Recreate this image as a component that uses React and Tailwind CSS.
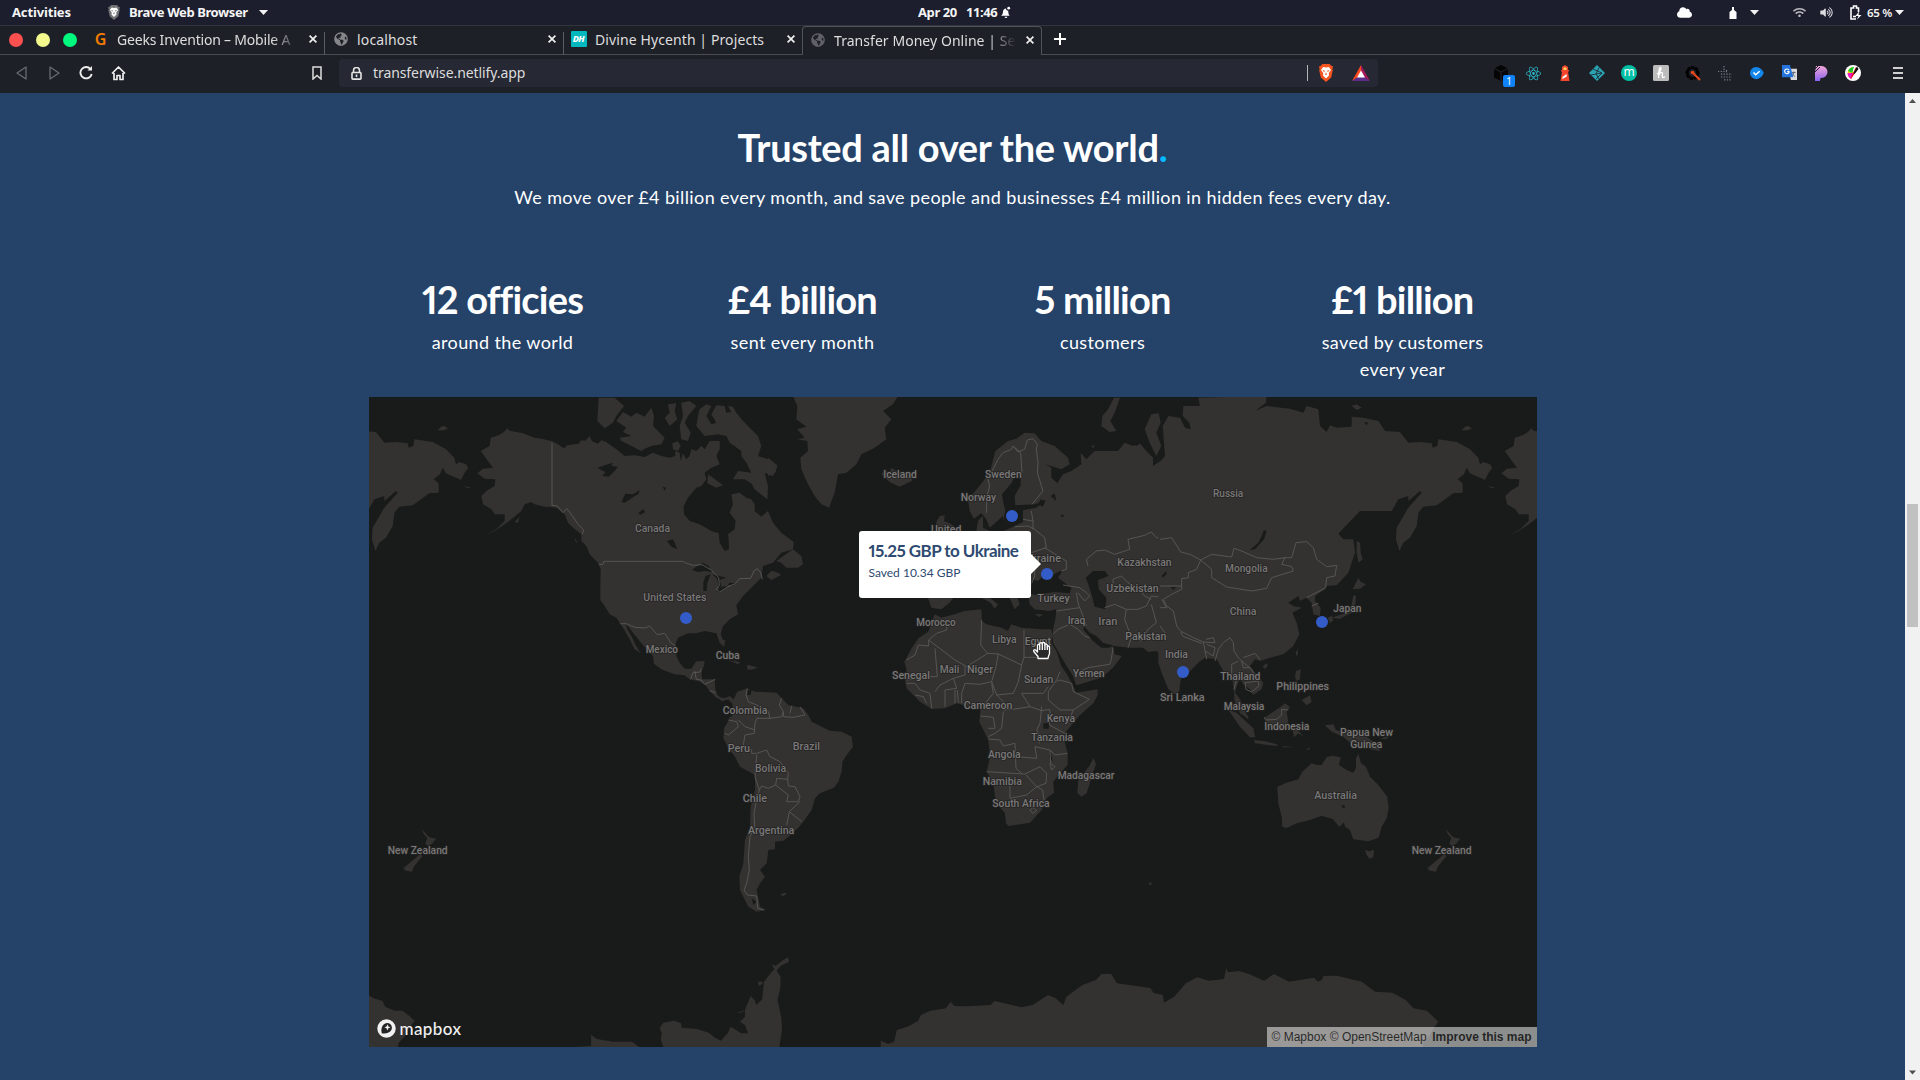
import React from "react";
import { SiReact } from "react-icons/si";
import { FaCloud, FaWifi, FaVolumeUp, FaGlobeAmericas } from "react-icons/fa";

const UI = "font-['Noto_Sans','Open_Sans',sans-serif]";

/* ---------- Desktop top bar ---------- */

function Caret() {
  return (
    <svg viewBox="0 0 9 5" className="h-[5px] w-[9px] shrink-0" fill="#f2f2f2">
      <path d="M0 0h9L4.5 5z" />
    </svg>
  );
}

function LionShield({ outer, inner, className }) {
  return (
    <svg viewBox="0 0 16 18" className={className}>
      <path d="M4.5 0h7l2 2 1.5 0.3-.6 3 .4 1-1.600 7.200L8 18l-5.200-4.500L1.200 6.300l.4-1-.6-3L2.500 2z" fill={outer} />
      <path d="M5.200 3l2.800.5 2.800-.5 2.200 3-2.200 3 .2 2.500L8 14.500 5 11.500 5.200 9 3 6z" fill={inner} />
      <path d="M4.800 6l2 .8v1L5 7.200zM11.200 6l-2 .8v1l1.800-.6zM8 8l.8 2.500L8 11.300l-.8-.8z" fill={outer} />
    </svg>
  );
}

function DesktopBar() {
  return (
    <div className={`relative flex h-[25px] shrink-0 items-center bg-[#1c1d2d] text-[13px] font-bold text-[#f4f4f4] ${UI}`}>
      <span className="ml-3 w-[95px] tracking-[-0.15px]">Activities</span>
      <LionShield outer="#6f7072" inner="#ffffff" className="h-[15px] w-[14px]" />
      <span className="ml-[8px] w-[130px] whitespace-nowrap tracking-[-0.4px]">Brave Web Browser</span>
      <Caret />
      <div className="ml-[650px] flex w-[110px] items-center gap-[9px] whitespace-nowrap tracking-[-0.4px]">
        <span>Apr 20</span>
        <span className="flex items-center gap-[3px]">
          11:46
          <svg viewBox="0 0 12 13" className="h-[13px] w-[11px]" fill="#fff">
            <path d="M1 10c2-1 2-2.500 2.300-5C3.700 3 5 2 6.500 2c.2 1.500 1 2.500 2.500 2.500 0 2.500.3 4 1.500 5.500zM5 11h3a1.500 1.500 0 0 1-3 0z" />
            <circle cx="9.500" cy="1.800" r="1.500" />
          </svg>
        </span>
      </div>
      <div className="ml-auto flex items-center pr-[16px]">
        <FaCloud className="h-[13px] w-[15px] text-white" />
        <svg viewBox="0 0 8 12" className="ml-[37px] h-[12px] w-[8px]" fill="#fff">
          <path d="M3 0h2v3l2.500 2v7h-7V5L3 3z" />
        </svg>
        <span className="ml-[13px] flex"><Caret /></span>
        <FaWifi className="ml-[34px] h-[11px] w-[13px] text-[#b9b9bd]" />
        <FaVolumeUp className="ml-[14px] h-[11px] w-[13px] text-[#dcdcdf]" />
        <svg viewBox="0 0 13 15" className="ml-[16px] h-[15px] w-[13px]" fill="none" stroke="#fff" strokeWidth="1.600">
          <path d="M9.500 5V3H7.500V1h-3v2H2v11h5M9.500 5v2" />
          <path d="M10 6.500 6.500 11h3L8 14.500 12.500 10h-3z" fill="#fff" stroke="none" />
          <path d="M4 11.500h3" />
        </svg>
        <span className="ml-[5px] w-[26px] whitespace-nowrap text-[11.500px] font-semibold tracking-[-0.3px]">65 %</span>
        <span className="ml-[2px] flex"><Caret /></span>
      </div>
    </div>
  );
}

/* ---------- Browser chrome ---------- */

function Close() {
  return (
    <svg viewBox="0 0 8 8" className="h-[8px] w-[8px] shrink-0" stroke="#f0f0f0" strokeWidth="1.700">
      <path d="M.6.6l6.800 6.800M7.400.6.6 7.400" />
    </svg>
  );
}

function Tab({ icon, title, active, fade, className }) {
  return (
    <div
      className={`flex h-[29px] items-center pb-[2px] pr-[7px] ${className} ${
        active ? "rounded-t-[4px] border border-b-0 border-[#51535a] bg-[#1e2028]" : "border-b border-[#4a4c53]"
      }`}
    >
      <span className="flex w-[17px] shrink-0 items-center justify-center">{icon}</span>
      <span
        className={`ml-[8px] min-w-0 flex-1 whitespace-nowrap text-[14px] text-[#dedede] ${
          fade ? "[mask-image:linear-gradient(to_right,#000_84%,transparent_99%)]" : ""
        }`}
      >
        {title}
      </span>
      <span className="ml-2 flex"><Close /></span>
    </div>
  );
}

function Divider() {
  return (
    <div className="flex h-[29px] w-px flex-col justify-end bg-[#1e2028]">
      <div className="h-[23px] w-px bg-[#5a5c62]" />
    </div>
  );
}

function TabStrip() {
  return (
    <div className={`flex h-[30px] shrink-0 items-end border-t border-[#32343e] bg-[#1e2028] ${UI}`}>
      <div className="flex h-[29px] w-[92px] items-center gap-[13px] border-b border-[#4a4c53] pl-[9px]">
        <span className="h-[14px] w-[14px] rounded-full bg-[#ff5050]" />
        <span className="h-[14px] w-[14px] rounded-full bg-[#f3f98c]" />
        <span className="h-[14px] w-[14px] rounded-full bg-[#00fa7e]" />
      </div>
      <Tab
        className="w-[232px] tracking-[-0.2px]"
        fade
        title="Geeks Invention – Mobile A"
        icon={<span className="text-[16px] font-semibold text-[#f57c00]">G</span>}
      />
      <Divider />
      <Tab className="w-[238px] pl-[7px] tracking-[0.15px]" title="localhost" icon={<FaGlobeAmericas className="h-[14px] w-[14px] text-[#85868a]" />} />
      <Divider />
      <Tab
        className="w-[238px] pl-[6px] tracking-[0.1px]"
        title="Divine Hycenth | Projects"
        icon={
          <span className="flex h-4 w-4 items-center justify-center rounded-[1px] bg-[#00b8bd] text-[9px] font-extrabold italic tracking-[-0.5px] text-white">
            DH
          </span>
        }
      />
      <Tab
        active
        fade
        className="w-[240px] pl-[6px] tracking-[0.05px]"
        title="Transfer Money Online | Se"
        icon={<FaGlobeAmericas className="h-[14px] w-[14px] text-[#606268]" />}
      />
      <div className="flex h-[29px] flex-1 items-center border-b border-[#4a4c53] pb-[2px] pl-[12px]">
        <svg viewBox="0 0 12 12" className="h-[12px] w-[12px]" stroke="#fff" strokeWidth="2">
          <path d="M6 0v12M0 6h12" />
        </svg>
      </div>
    </div>
  );
}

function Slot({ children, className }) {
  return <div className={`relative flex shrink-0 items-center justify-center ${className}`}>{children}</div>;
}

const extensions = [
  <>
    <svg viewBox="0 0 16 16" className="h-4 w-4">
      <path d="M8 0l7 3.500v9L8 16l-7-3.500v-9z" fill="#050506" />
      <path d="M1 3.500l7 3.500 7-3.500M8 7v9" stroke="#24262e" fill="none" />
    </svg>
    <span className="absolute left-[18px] top-[14px] flex h-[12px] w-[12px] items-center justify-center rounded-[2px] bg-[#1083fa] text-[10px] leading-none text-white">1</span>
  </>,
  <SiReact className="h-[15px] w-[15px] text-[#2cb5c8]" />,
  <svg viewBox="0 0 12 16" className="h-4 w-3">
    <path d="M3 2l3-2 3 2v3h1v1.500H9L10.500 16h-9L3 6.500H2V5h1z" fill="#f4452e" />
    <path d="M4.500 2.500h3V5h-3z" fill="#fdd55b" />
    <path d="M3.500 12l4-3 .3 2.500-4.500 2.500z" fill="#fff" />
  </svg>,
  <svg viewBox="0 0 16 16" className="h-4 w-4">
    <path d="M8 0l8 8-8 8-8-8z" fill="#2aa3b3" />
    <path d="M4 4l9 4-6 6M10 2.500L7 9l-5 1M7 9l3 5M13 8l-6 1" stroke="#1e2028" fill="none" strokeWidth=".8" />
  </svg>,
  <span className="flex h-4 w-4 items-center justify-center rounded-full bg-[#00bfa5] pb-[2px] text-[12px] leading-none text-white">m</span>,
  <svg viewBox="0 0 16 16" className="h-4 w-4">
    <rect width="16" height="16" rx="1.500" fill="#bcbcbc" />
    <path d="M4 9c3-1 5-6 3.500-6.500S5.800 8 5.500 13M6 10c1-3 3.500-3.500 3.500-1.500 0 1.500-.8 4 .8 4 1 0 1.700-1 1.700-1" stroke="#fff" fill="none" strokeWidth="1.300" />
  </svg>,
  <svg viewBox="0 0 16 16" className="h-4 w-4">
    <circle cx="7.500" cy="8" r="5.500" stroke="#000" strokeWidth="3" strokeDasharray="3 1" fill="none" />
    <circle cx="7.500" cy="8" r="5" stroke="#000" strokeWidth="2" fill="none" />
    <path d="M7 7l8 8" stroke="#e8471c" strokeWidth="2.200" />
    <circle cx="7.500" cy="7.500" r="1.800" fill="#e8471c" />
  </svg>,
  <svg viewBox="0 0 16 16" className="h-4 w-4" stroke="#7c7e85" strokeWidth="1.200" strokeDasharray="1.200 1.500">
    <path d="M7 1v5M1 6.500h9M4 9.200h11M4 12h11M7 14.800h8M9.500 5v3" />
  </svg>,
  <svg viewBox="0 0 16 16" className="h-[14px] w-[14px]">
    <path d="M7 1c4 0 8 4 8.500 6.500C15.500 11 11 15 7 15a7 7 0 0 1 0-14z" fill="#1386ea" />
    <path d="M4 7.500l2.500 2.500L11 6" stroke="#fff" strokeWidth="1.800" fill="none" />
  </svg>,
  <svg viewBox="0 0 17 17" className="h-4 w-[17px]">
    <path d="M7 4h9.500v12H10z" fill="#d9dadc" />
    <path d="M11 8h4M13 7v1c0 2-1 3-2 4M11.500 9c.5 1.500 2 3 3 3" stroke="#5c6470" fill="none" />
    <path d="M.5 0H9l3.500 13H.5z" fill="#2573dd" />
    <path d="M8 5.500A2.500 2.500 0 1 0 8 8V7H6" stroke="#fff" fill="none" strokeWidth="1.200" />
  </svg>,
  <svg viewBox="0 0 14 16" className="h-4 w-[14px]">
    <defs>
      <linearGradient id="plume" x1="0" y1="0" x2="0" y2="1">
        <stop offset="0" stopColor="#f3a7d8" />
        <stop offset="1" stopColor="#8a62f0" />
      </linearGradient>
    </defs>
    <path d="M2 1h5.500a6 6 0 0 1 0 12H6.500l-.5 3H1V7z" fill="url(#plume)" />
    <path d="M0 5l5-5M0 8l6-6" stroke="#1e2028" />
  </svg>,
  <svg viewBox="0 0 16 16" className="h-4 w-4">
    <circle cx="8" cy="8" r="8" fill="#fff" />
    <path d="M8 2a6 6 0 0 0-5.500 6H8z" fill="#ffd800" />
    <path d="M2.500 8c0 3 1.500 5 3.500 6l3-6z" fill="#f21ac1" />
    <path d="M3 6c1-2 3-4 6-4l-2 6z" fill="#18c933" />
    <path d="M11 2l2 2-5 7-2 3-.5-1L8 8z" fill="#e3101a" />
    <path d="M12 1.500l1.500 2.500-4 5-1-1z" fill="#101010" />
  </svg>,
];

function Toolbar() {
  return (
    <div className={`flex h-[38px] shrink-0 items-center bg-[#1e2028] pb-[2px] ${UI}`}>
      <Slot className="ml-[6px] w-8">
        <svg viewBox="0 0 12 14" className="h-[14px] w-[12px]" fill="none" stroke="#696b72" strokeWidth="1.300" strokeLinejoin="round">
          <path d="M10 1v12L1 7z" />
        </svg>
      </Slot>
      <Slot className="w-8">
        <svg viewBox="0 0 12 14" className="h-[14px] w-[12px]" fill="none" stroke="#696b72" strokeWidth="1.300" strokeLinejoin="round">
          <path d="M2 1v12l9-6z" />
        </svg>
      </Slot>
      <Slot className="w-8">
        <svg viewBox="0 0 14 14" className="h-[14px] w-[14px]" fill="none" stroke="#eee" strokeWidth="1.900">
          <path d="M11.500 3A5.700 5.700 0 1 0 12.700 8" />
          <path d="M8.500 4.500H13V0z" fill="#eee" stroke="none" />
        </svg>
      </Slot>
      <Slot className="w-8">
        <svg viewBox="0 0 15 15" className="h-[15px] w-[15px]" fill="none" stroke="#eee" strokeWidth="1.700" strokeLinejoin="round">
          <path d="M1 7.500L7.500 1 14 7.500M3 7v6.500h3V9.500h3v4h3V7" />
        </svg>
      </Slot>
      <Slot className="ml-[167px] w-8">
        <svg viewBox="0 0 10 14" className="h-[14px] w-[10px]" fill="none" stroke="#ddd" strokeWidth="1.500">
          <path d="M1 1h8v12L5 9.500 1 13z" />
        </svg>
      </Slot>
      <div className="ml-[6px] flex h-[28px] w-[1039px] items-center rounded-[4px] bg-[#262833]">
        <svg viewBox="0 0 11 13" className="ml-[12px] h-[13px] w-[11px]" fill="none" stroke="#e6e6e6" strokeWidth="1.600">
          <path d="M2.500 5V3.500a3 3 0 0 1 6 0V5" />
          <rect x="1" y="5.500" width="9" height="6.600" rx=".8" />
          <path d="M5.500 7.500v2.500" />
        </svg>
        <span className="ml-[11px] pb-[2px] text-[14px] tracking-[-0.08px] text-[#dcdcdc]">transferwise.netlify.app</span>
        <span className="ml-auto h-4 w-px bg-[#b5b6ba]" />
        <Slot className="w-9">
          <LionShield outer="#f5531f" inner="#ffffff" className="h-[18px] w-[16px]" />
        </Slot>
        <Slot className="w-[34px]">
          <svg viewBox="0 0 18 16" className="h-4 w-[18px]">
            <path d="M9 0L0 16l9-6z" fill="#ff4a21" />
            <path d="M9 0l9 16-9-6z" fill="#a3195b" />
            <path d="M0 16h18l-9-6z" fill="#5d2d8c" />
            <path d="M9 5.500l4 7H5z" fill="#fff" />
          </svg>
        </Slot>
      </div>
      <div className="ml-[107px] flex">
        {extensions.map((icon, i) => (
          <Slot key={i} className="h-6 w-8">{icon}</Slot>
        ))}
      </div>
      <div className="ml-auto mr-[17px] flex flex-col gap-[3px]">
        <span className="h-[2px] w-[10px] bg-[#d0d0d0]" />
        <span className="h-[2px] w-[10px] bg-[#d0d0d0]" />
        <span className="h-[2px] w-[10px] bg-[#d0d0d0]" />
      </div>
    </div>
  );
}

/* ---------- Map ---------- */

const LAND = "#343231";
const SEA = "#191b1a";

const northAmerica = {
  land: [
    "368,125 392,118 408,108 418,97 425,104 465,112 500,125 520,128 550,135 565,142 588,157 598,148 632,143 640,133 652,134 665,120 672,136 690,143 700,133 714,138 745,160 770,180 800,178 830,183 855,170 880,180 905,185 922,180 922,165 935,170 938,195 945,172 955,190 965,180 970,160 985,165 1000,150 1010,160 1025,135 1055,135 1055,160 1045,180 1055,205 1030,215 1010,230 1015,250 1000,270 985,275 960,305 947,330 948,355 965,375 995,385 1030,405 1052,412 1055,440 1070,465 1083,460 1082,430 1080,415 1100,400 1103,375 1085,350 1095,325 1090,295 1115,290 1135,305 1150,310 1160,325 1160,345 1180,362 1200,345 1215,380 1240,410 1277,438 1275,460 1240,470 1215,500 1185,510 1180,545 1165,560 1150,575 1125,600 1105,628 1110,655 1085,670 1065,690 1058,715 1068,740 1068,752 1055,740 1045,712 1010,705 985,712 960,712 930,725 922,745 925,780 935,800 950,818 970,818 985,796 1010,795 1008,810 1000,825 1003,850 1040,850 1042,880 1050,900 1070,908 1085,900 1100,912 1092,918 1080,908 1065,914 1045,905 1025,885 1010,865 990,855 965,850 950,838 920,835 880,820 858,803 855,780 840,765 815,735 795,710 775,685 778,700 790,720 803,748 818,772 800,760 785,730 768,700 757,683 745,665 725,655 710,630 697,612 697,570 698,520 690,500 665,475 655,450 640,435 640,415 615,395 600,380 590,355 565,335 550,333 530,332 500,325 490,318 470,325 460,345 430,370 410,385 380,405 350,420 385,400 410,375 410,355 380,355 370,340 345,325 340,300 355,285 380,270 382,250 350,248 328,232 345,218 375,215 360,195 338,165 365,150",
    "692,5 740,5 768,30 745,60 735,80 710,97 688,75 690,40",
    "745,75 765,48 790,62 805,50 830,62 850,35 858,60 855,90 890,125 880,145 850,150 830,158 820,165 790,150 760,135 755,125 790,120 765,108 775,95",
    "900,25 925,22 920,45 928,70 905,90 890,65 905,50",
    "940,20 965,15 985,30 960,60 950,80 968,110 960,135 940,130 935,90 945,60",
    "913,142 930,136 938,150 930,165 915,160",
    "990,60 995,40 1015,25 1030,30 1015,60 1030,85 1045,80 1030,55 1045,28 1070,30 1075,50 1090,48 1080,30 1095,32 1105,50 1125,75 1140,90 1170,120 1180,150 1170,180 1200,190 1228,210 1215,240 1190,230 1200,270 1198,310 1175,292 1160,280 1150,262 1130,250 1095,250 1110,225 1150,230 1135,200 1120,180 1120,165 1085,140 1075,120 1050,115 1010,120 985,90",
    "1020,235 1035,245 1065,268 1045,275 1018,262",
    "210,103 218,93 230,90 240,98 225,102",
    "440,378 455,362 450,380",
    "1170,495 1200,485 1195,505",
    "1195,540 1210,525 1225,528 1240,536 1210,552",
    "1225,495 1275,460 1300,480 1305,505 1290,515 1255,515 1240,500",
    "1095,792 1118,800 1105,803",
    "1138,807 1168,814 1150,822 1138,820",
    "620,425 630,442 622,436",
  ],
  water: [
    "688,215 715,206 735,200 730,210 750,212 735,230 722,242 703,240 712,228 700,222",
    "760,318 772,293 795,295 815,283 812,293 790,307 770,320",
    "810,352 825,340 832,348 818,356",
    "884,272 894,275 890,285",
    "897,435 915,430 928,460 910,452",
    "972,522 985,512 1005,500 1022,510 1032,528 1010,525 990,528",
    "1012,540 1028,535 1018,560 1016,585 1006,585 1006,560",
    "1033,535 1075,545 1055,552 1060,570 1052,578 1048,550",
    "1045,585 1060,572 1082,570 1055,590",
    "1078,567 1085,560 1103,562 1095,569",
    "1085,155 1098,150 1110,160 1120,180 1100,195 1085,185",
  ],
  lines: [
    "552,140 552,328 568,330 585,350 597,338 612,358 630,385 647,402 643,415",
    "693,505 705,505 708,496 945,496 950,500 975,508 1002,506 1030,522 1052,545 1054,568 1045,580 1055,588 1080,572 1102,563 1115,548 1148,547 1158,525 1168,518 1178,530 1183,550",
    "757,683 775,683 800,694 832,696 845,690 868,716 890,712 910,742 922,748",
    "968,850 975,830 998,828 1000,818",
    "980,825 985,850 1000,852 1010,865 1042,850",
    "1025,884 1042,890",
    "1137,877 1130,892 1140,917 1165,922 1185,935",
    "1085,965 1110,975 1128,990",
  ],
};

const europe = {
  land: [
    "75,0 390,0 375,25 345,45 370,70 350,95 355,130 320,155 280,175 265,205 235,230 210,235 200,290 183,335 160,325 140,300 120,265 100,220 97,185 120,165 118,135 88,130 110,125 88,100 115,92 85,70 88,30",
    "340,235 350,222 365,232 370,215 385,225 430,240 432,255 395,272 365,258",
    "0,185 28,208 22,230 0,240",
    "505,378 515,360 530,358 528,375 550,385 575,405 580,430 500,430",
    "1050,5 1056,5 1040,50 1027,75 1045,105 1025,108 1000,90 1003,60 1020,40 1038,5",
    "600,310 630,275 665,230 682,165 720,135 745,128 770,110 800,112 820,135 860,150 900,185 905,205 880,220 832,205 850,215 850,245 868,262 885,235 910,225 940,205 938,170 955,190 980,165 1010,165 1050,165 1070,140 1095,150 1110,135 1135,165 1155,185 1155,210 1185,190 1210,200 1210,800 1190,790 1165,765 1140,768 1125,755 1085,755 1040,750 1005,740 985,720 965,710 950,692 945,700 975,735 1000,755 1022,755 1035,750 1040,775 1062,780 1035,815 1000,845 925,868 915,840 890,800 870,765 855,740 855,700 862,670 865,640 845,645 800,640 785,625 780,580 640,580 600,580 560,600 545,620 520,640 490,635 480,605 500,500 560,440 625,405 630,375 645,360 645,395 665,405 685,405 705,380 705,360 665,395 655,370 640,352 618,368 605,345",
    "1130,100 1150,55 1172,52 1178,80 1165,110 1180,150 1165,180 1145,140",
    "640,605 665,605 690,625 680,638 668,620",
    "725,605 748,605 755,625 740,640",
    "800,655 825,655 815,663",
    "970,150 980,148 975,157",
  ],
  water: [
    "705,315 702,295 730,262 738,245 758,240 758,268 740,300 742,328 800,325 835,312 805,335 765,343 765,378 735,392 700,408 683,408 705,375 712,345",
    "790,575 792,550 810,555 835,530 845,550 862,532 885,522 870,545 910,575 905,592 860,588 800,597 780,590",
    "953,545 975,525 1010,525 1022,540 990,552 992,580 1015,605 1012,640 980,632 972,600 962,568",
    "810,325 818,310 832,315 825,332",
    "848,300 860,292 865,315",
    "875,360 885,355 888,364",
    "1060,130 1090,118 1120,140 1105,150 1085,140",
  ],
  lines: [
    "655,350 657,300 665,270 660,250 675,220 690,190 705,170 730,160 735,150 750,168 770,160 778,132 795,128 808,145 805,160 810,200 808,230 825,285 792,325",
    "735,150 758,170 762,230",
    "765,370 795,375 790,345",
    "740,392 780,390 800,400 830,425 835,455 790,470",
    "795,375 795,400",
    "830,455 870,480 895,495 895,520 880,525",
    "960,510 955,490 985,465 1010,462 1040,475 1085,460 1080,430 1130,418 1150,408 1165,425 1185,430 1200,435 1235,465",
    "885,567 935,575 955,590 965,600 950,615 930,590",
    "925,590 930,620 935,635 865,645",
    "935,635 945,660 955,690",
    "855,715 870,700 905,685 930,700 950,720 965,725",
    "1035,755 1030,790 1025,805 960,815 920,835",
    "1010,635 1040,625 1075,640 1070,670 1085,710 1090,725 1080,755",
    "1035,590 1035,550 1060,540 1080,560 1110,575 1130,600 1150,610",
    "1075,640 1110,640 1135,630 1150,600 1185,605 1180,625 1200,640",
    "1150,625 1165,680 1140,700 1120,735 1100,728",
    "800,520 800,540 792,560",
  ],
};

const southAmericaAfrica = {
  land: [
    "165,160 185,178 205,170 217,185 232,155 262,145 285,155 350,158 365,175 385,195 430,205 445,225 455,245 480,258 510,272 545,275 575,290 579,320 560,345 547,365 545,395 535,425 522,443 480,460 465,475 455,510 430,545 415,563 385,590 370,602 345,605 345,628 325,630 320,670 300,690 315,710 300,730 290,750 293,765 300,800 317,810 290,815 265,800 250,770 240,750 238,710 250,670 255,600 270,560 272,500 285,450 285,405 240,380 225,350 205,325 190,295 192,265 210,235 222,220 217,192 205,178 185,184",
    "824,-77 844,-67 884,-77 914,-87 964,-92 966,-57 979,-47 1024,-37 1044,-27 1054,-47 1084,-37 1144,-32 1174,-32 1179,-12 1174,8 1189,33 1204,78 1224,108 1239,138 1249,158 1313,148 1313,165 1300,190 1260,225 1235,255 1218,275 1215,310 1223,340 1223,375 1200,400 1180,425 1182,458 1160,475 1145,510 1110,548 1080,553 1045,558 1038,550 1035,520 1018,500 1005,470 1000,430 980,395 990,350 985,300 970,270 958,245 962,205 945,205 910,195 890,190 855,205 815,207 780,185 760,165 740,145 735,125 740,90 733,65 755,25 775,-5 805,-25",
    "1300,353 1308,372 1295,410 1280,460 1265,470 1252,460 1255,420 1275,395 1290,375",
    "262,74 292,83 275,88 262,86",
    "180,0 195,0 192,22",
    "360,765 372,758 382,760 370,768",
    "200,60 240,68 235,72",
    "1467,725 1478,732 1468,735",
  ],
  water: ["262,150 275,148 272,165 262,165", "1150,250 1168,250 1166,266 1150,266", "1170,330 1175,350 1178,365 1168,350", "275,775 290,785 280,795"],
  lines: [
    "262,148 258,165 265,185 290,195 325,215 330,235 290,235 285,250 283,280 255,285 250,315",
    "205,240 230,245 235,260 205,285 195,280",
    "235,240 255,260 285,270",
    "365,175 358,195 370,215 365,230 330,235",
    "370,215 370,230 400,232 435,225 420,200",
    "395,198 390,220",
    "250,315 275,330 275,340 290,340 320,330 330,350 360,365 385,400 383,418 350,415 347,435 325,445 305,438 298,450 285,410 290,345",
    "347,435 385,465 380,485 415,485 420,470 405,440 385,438 383,418",
    "420,485 388,515 380,555",
    "388,515 425,545",
    "298,450 290,480 282,520 284,560 270,590 265,650 268,690 260,730 252,750 263,765 290,768 293,805 312,810",
    "806,0 885,60 920,80 983,40 1015,42 1085,75 1092,52 1092,0",
    "1092,0 1092,-30",
    "806,0 806,18 775,15 765,45 740,60",
    "825,25 832,110 790,110 740,120",
    "806,0 830,-20 860,-30 860,-60",
    "983,40 962,15 965,-60",
    "1015,42 1008,80 995,125 1010,165 1060,160 1075,125 1085,75",
    "1092,52 1165,52",
    "915,80 915,105 880,115 840,135 825,155",
    "880,115 890,145 855,150 855,200",
    "905,190 905,160 915,130 960,133 995,125",
    "885,150 885,190",
    "892,150 895,188",
    "740,130 765,130 780,150 810,160 815,205",
    "765,165 790,170 800,190",
    "995,130 1000,160 980,185 970,205",
    "1010,165 1035,190 1030,210 1060,208 1110,200 1085,160 1150,160 1165,140",
    "1200,95 1190,120 1165,155 1165,180 1200,210 1240,210 1288,178 1240,155 1235,130 1200,120 1190,125",
    "1240,210 1225,245",
    "1145,200 1140,250 1130,270 1140,290 1138,310",
    "1170,210 1168,255 1215,280",
    "1110,200 1145,212 1170,208",
    "1030,215 1025,265 1005,280 985,290",
    "962,228 1000,232 1005,265 985,265",
    "985,297 1020,300 1030,318 1065,310 1068,385 1085,400",
    "980,395 1060,400 1095,402",
    "1068,350 1130,355 1125,320 1170,330 1185,345 1222,340",
    "1095,402 1140,380 1160,400 1158,430 1130,440 1098,405",
    "1050,410 1050,475 1075,470 1100,465 1130,440 1148,450 1152,480",
    "1110,510 1120,502 1130,512 1118,520 1110,510",
    "1170,330 1172,370 1185,380 1175,390 1170,370",
  ],
};

const asia = {
  land: [
    "-5,205 15,180 12,140 8,90 25,60 60,65 75,95 92,100 88,80 68,60 70,30 120,30 115,5 320,0 318,20 285,45 320,30 390,38 430,50 440,30 475,40 480,90 500,108 510,88 530,95 575,92 575,62 610,65 655,75 675,105 720,108 745,140 780,138 815,142 818,155 832,150 835,130 890,138 930,160 955,185 960,205 970,198 990,205 997,215 985,232 975,252 930,232 920,215 912,235 893,250 908,262 908,290 880,292 830,328 790,332 775,350 770,390 750,425 730,440 718,465 708,430 710,395 745,335 785,290 780,285 745,315 745,300 715,310 695,345 645,345 600,345 535,413 550,430 580,430 585,470 565,530 530,568 500,570 495,580 465,600 465,615 482,635 480,660 460,655 455,620 440,605 420,615 415,600 385,620 400,630 425,635 397,650 410,680 418,715 400,750 370,775 330,785 300,795 285,790 270,810 285,830 310,860 305,880 280,897 270,880 250,865 240,850 230,870 225,890 240,910 265,965 245,950 225,915 220,870 215,835 190,825 170,790 135,785 115,800 85,830 62,850 58,885 45,895 25,880 5,830 -5,800",
    "590,435 600,440 602,470 608,490 596,500 590,470",
    "595,545 602,558 618,565 600,578 578,580",
    "580,598 588,600 586,625 575,650 540,668 515,665 560,650 575,625",
    "503,665 515,660 520,672 510,682",
    "408,768 415,757 413,775 408,780",
    "308,812 318,802 324,808 314,820",
    "408,825 422,820 420,850 410,855 405,842",
    "425,912 450,898 455,918 440,928",
    "63,910 72,915 68,925",
    "575,30 590,25 605,35 590,42",
    "905,103 920,90 935,98 920,103",
    "985,270 1005,275 995,277",
  ],
  water: ["268,463 295,440 305,420 312,402 320,405 312,430 285,460", "5,540 18,526 20,534 8,545", "32,574 48,573 40,582", "612,80 625,78 620,88"],
  lines: [
    "0,430 35,425 62,468 90,475 122,492 155,475 215,483 222,457 245,465 290,485 340,490 375,485 395,485 408,440 440,437 460,455 470,490 500,512 530,508 525,540 500,545 497,575 440,605",
    "122,492 155,520 155,545 200,573 275,585 320,577 335,545 400,525 395,512 365,505 375,485",
    "122,492 110,520 85,530 85,545 65,548 65,580 35,595 10,610 20,630 40,645 50,690 62,705 100,725 130,738 165,740 160,725 138,730",
    "0,570 65,570",
    "62,708 70,722 125,742",
    "0,635 20,635 5,610",
    "130,738 140,790",
    "140,745 165,755 160,780 135,765",
    "165,795 175,760 190,740 210,725 220,740 222,765 235,785 245,795",
    "235,795 215,805 215,835 230,850 222,880",
    "245,795 275,820 290,850",
    "250,785 285,772 300,790",
    "245,795 250,815 270,815",
    "255,860 295,855 297,870 275,888 258,880 255,860",
    "0,730 15,710 0,690",
    "455,630 475,622",
  ],
};

const oceania = {
  land: [
    "265,270 290,278 340,325 346,352 330,352 300,320",
    "342,360 375,364 415,374 410,378 345,370",
    "285,218 290,245 325,290 325,298 300,280 283,240",
    "372,295 400,275 420,262 435,250 450,262 440,275 445,305 430,330 410,332 385,325",
    "458,330 475,330 490,350 475,340 462,352",
    "430,378 465,382 430,382",
    "498,388 512,382 505,390",
    "555,316 580,313 588,330 620,338 680,350 700,365 722,394 690,387 665,365 635,372 610,350 575,335",
    "720,357 745,348 740,357",
    "412,500 440,488 475,478 487,455 515,430 530,435 545,435 560,412 575,407 602,412 597,435 620,450 640,458 648,445 648,415 655,402 663,430 678,440 690,470 715,495 742,530 746,565 740,595 725,620 716,653 685,664 640,658 630,630 615,620 612,607 598,620 578,597 545,587 510,600 470,610 440,624 427,620 425,590 415,550",
    "675,690 688,694 702,690 700,712 688,716 680,705",
    "918,627 928,640 940,652 960,656 948,672 935,678 928,670 934,655 922,640",
    "912,703 920,708 895,738 888,755 870,752 862,745 885,725",
    "843,487 860,500 850,493",
  ],
  water: ["605,556 614,556 614,564 607,563"],
  lines: ["372,292 380,300 410,298 425,285 425,268 445,270"],
};

const peninsula = [
  "0,585 15,595 38,603 45,620 70,632 90,632 105,645 122,662 110,680 95,710 80,728 78,741 0,741",
  "540,741 583,738 583,705 598,717 640,725 690,725 708,741",
  "772,741 765,718 768,700 762,685 772,668 800,662 818,670 820,683 860,687 890,698 905,712 922,722 940,700 948,680 962,690 975,700 993,700 985,675 972,665 985,650 985,630 1000,588 1010,600 1015,615 1030,598 1035,545 1055,515 1062,508 1055,493 1065,498 1085,480 1098,472 1100,485 1078,498 1068,512 1078,530 1078,560 1070,600 1080,650 1082,690 1075,741",
  "1018,545 1032,545 1030,552 1022,558",
  "962,640 985,630 978,637",
  "1340,741 1340,722 1360,732 1375,725 1382,690 1410,680 1438,662 1445,645 1470,632 1510,625 1523,605 1532,618 1568,620 1568,741",
];

const eastAntarctica =
  "0,320 80,315 90,303 125,312 160,322 190,315 230,285 250,295 270,315 278,290 320,255 355,240 370,222 395,222 410,250 498,264 505,278 530,285 533,308 560,290 590,250 620,232 650,242 690,237 696,205 700,217 730,213 755,222 795,242 820,222 860,245 925,233 935,245 945,240 950,228 985,227 1050,245 1085,275 1130,278 1165,300 1185,325 1220,332 1250,365 1240,381 1225,410 1210,430 1210,441 0,441";

function Region({ data, transform }) {
  return (
    <g transform={transform}>
      {data.land.map((p, i) => (
        <polygon key={i} points={p} fill={LAND} />
      ))}
      {data.water.map((p, i) => (
        <polygon key={i} points={p} fill={SEA} />
      ))}
      {data.lines.map((p, i) => (
        <polyline key={i} points={p} fill="none" stroke="#5c5a59" strokeWidth="2.600" strokeLinejoin="round" />
      ))}
    </g>
  );
}

/* name, left, right, baseline */
const labelGroups = [
  {
    transform: "translate(368 396) scale(.33333)",
    items: [
      ["Canada", 801, 906, 409],
      ["United States", 826, 1015, 616],
      ["Mexico", 833, 930, 771],
      ["Cuba", 1043, 1115, 790],
    ],
  },
  {
    transform: "translate(768 396) scale(.33333)",
    items: [
      ["Iceland", 346, 446, 245],
      ["Sweden", 651, 761, 246],
      ["Norway", 578, 684, 316],
      ["United", 489, 580, 410],
      ["Ukraine", 768, 879, 497],
      ["Kazakhstan", 1048, 1211, 511],
      ["Uzbekistan", 1015, 1172, 588],
      ["Turkey", 808, 905, 619],
      ["Morocco", 445, 563, 690],
      ["Iraq", 899, 952, 683],
      ["Iran", 991, 1048, 687],
      ["Pakistan", 1072, 1195, 731],
      ["Libya", 672, 746, 742],
      ["Egypt", 770, 849, 746],
      ["Mali", 515, 574, 832],
      ["Niger", 597, 675, 832],
      ["Senegal", 372, 486, 850],
      ["Sudan", 768, 856, 862],
      ["Yemen", 914, 1010, 844],
      ["Cameroon", 587, 733, 940],
      ["Kenya", 836, 921, 978],
    ],
  },
  {
    transform: "translate(1160 396) scale(.33333)",
    items: [
      ["Russia", 159, 250, 303],
      ["Mongolia", 195, 323, 529],
      ["China", 209, 289, 657],
      ["Japan", 520, 604, 648],
      ["India", 15, 84, 787],
      ["Thailand", 181, 301, 851],
      ["Philippines", 349, 507, 881],
      ["Malaysia", 191, 313, 943],
      ["Sri Lanka", 0, 134, 916],
    ],
  },
  {
    transform: "translate(660 640) scale(.33333)",
    items: [
      ["Colombia", 188, 322, 223],
      ["Brazil", 398, 480, 331],
      ["Peru", 203, 270, 336],
      ["Bolivia", 285, 378, 396],
      ["Chile", 248, 321, 487],
      ["Argentina", 264, 403, 582],
      ["Tanzania", 1113, 1239, 303],
      ["Angola", 984, 1082, 354],
      ["Namibia", 968, 1086, 435],
      ["Madagascar", 1193, 1363, 418],
      ["South Africa", 997, 1169, 502],
    ],
  },
  {
    transform: "translate(1140 620) scale(.33333)",
    items: [
      ["Indonesia", 373, 508, 329],
      ["Papua New", 600, 759, 347],
      ["Guinea", 631, 727, 383],
      ["Australia", 523, 651, 537],
      ["New Zealand", 815, 995, 703],
      ["New Zealand", -2257, -2077, 703],
    ],
  },
];

const markers = [
  [686, 618],
  [1012, 516],
  [1047, 574],
  [1322, 622],
  [1183, 672],
];

function WorldMap() {
  return (
    <svg viewBox="369 397 1168 650" className="block h-[650px] w-[1168px]">
      <rect x="369" y="397" width="1168" height="650" fill={SEA} />
      <defs>
        <g id="world">
          <Region data={northAmerica} transform="translate(368 396) scale(.33333)" />
          <Region data={europe} transform="translate(768 396) scale(.33333)" />
          <Region data={southAmericaAfrica} transform="translate(660 640) scale(.33333)" />
          <Region data={asia} transform="translate(1160 396) scale(.33333)" />
          <Region data={oceania} transform="translate(1140 620) scale(.33333)" />
        </g>
      </defs>
      <use href="#world" x="-1024" />
      <use href="#world" x="1024" />
      <use href="#world" />
      <g fill={LAND}>
        <g transform="translate(368 800) scale(.38265 .33333)">
          {peninsula.map((p, i) => (
            <polygon key={i} points={p} />
          ))}
        </g>
        <polygon points={eastAntarctica} transform="translate(960 900) scale(.38265 .33333)" />
      </g>
      {labelGroups.map((g, gi) => (
        <g
          key={gi}
          transform={g.transform}
          fill="#7a7877"
          stroke="#242424"
          strokeWidth="5"
          strokeLinejoin="round"
          className="font-['Roboto',sans-serif] text-[33px] font-medium [paint-order:stroke]"
        >
          {g.items.map(([name, x0, x1, y], i) => (
            <text key={i} x={x0} y={y} textLength={x1 - x0} lengthAdjust="spacingAndGlyphs">
              {name}
            </text>
          ))}
        </g>
      ))}
      {markers.map(([cx, cy], i) => (
        <circle key={i} cx={cx} cy={cy} r="6" fill="#335cc8" />
      ))}
      <g transform="translate(1033 642)" fill="#2a2a2a" stroke="#fff" strokeWidth="1.300" strokeLinejoin="round">
        <path d="M5 16.500v-2L.8 9.500c-.8-1.200.8-2.500 2-1.300L4.500 10V3.500c0-1.500 2.200-1.500 2.200 0V2c0-1.700 2.600-1.700 2.600 0v-.3c0-1.700 2.600-1.500 2.600.1V3c0-1.300 2.400-1.300 2.400.2v1.500c.3-1 2.200-1 2.200.5v6c0 1.500-1.500 3-1.500 5.300z" />
        <path d="M6.700 3.500v4.500M9.300 2v6M11.900 2.500V8M14.300 4.500V8" fill="none" />
      </g>
    </svg>
  );
}

function MapboxLogo() {
  return (
    <div className="absolute bottom-[9px] left-[8px] flex items-center gap-[4px]">
      <svg viewBox="0 0 20 20" className="h-[19px] w-[19px]">
        <circle cx="10" cy="10" r="9.700" fill="#f1f1f1" />
        <path d="M5 15c-1-4 0-7.500 2-9.300a5 5 0 0 1 7.300 7C12.500 14.800 9 15.700 5 15z" fill="#242424" />
        <path d="M11 5.500l1 2.300 2.300 1-2.300 1-1 2.300-1-2.300-2.300-1 2.300-1z" fill="#f1f1f1" />
      </svg>
      <span className="font-['Lato',sans-serif] text-[17px] font-medium leading-[19px] tracking-[0.4px] text-[#f1f1f1]">mapbox</span>
    </div>
  );
}

function Popup() {
  return (
    <div className="absolute left-[490px] top-[134px] h-[67px] w-[172px] rounded-[3px] bg-white pl-[10px] pt-[9px] font-['Lato',sans-serif] text-[#2e4a70]">
      <p className="whitespace-nowrap text-[17px] font-bold proportional-nums leading-[22px] tracking-[-0.55px]">15.25 GBP to Ukraine</p>
      <p className="whitespace-nowrap pt-px text-[12px] leading-[20px]">Saved 10.34 GBP</p>
      <span className="absolute left-full top-[23px] h-0 w-0 border-y-[10px] border-l-[10px] border-y-transparent border-l-white" />
    </div>
  );
}

/* ---------- Page ---------- */

const stats = [
  ["12 officies", "around the world"],
  ["£4 billion", "sent every month"],
  ["5 million", "customers"],
  ["£1 billion", "saved by customers every year"],
];

function TrustedSection() {
  return (
    <section className="flex flex-1 flex-col items-center bg-[#254268] pt-[31px] font-['Lato',sans-serif] text-white">
      <h2 className="text-[38px] font-bold leading-[46px] tracking-[-0.3px]">
        Trusted all over the world<span className="text-[#00b9ff]">.</span>
      </h2>
      <p className="mt-[14px] text-[18px] leading-[27px] tracking-[0.39px]">
        We move over £4 billion every month, and save people and businesses £4 million in hidden fees every day.
      </p>
      <div className="mt-[65px] grid h-[121px] w-[1200px] grid-cols-4">
        {stats.map(([value, label]) => (
          <div key={value} className="flex flex-col items-center">
            <h3 className="text-[38px] font-bold proportional-nums leading-[46px] tracking-[-0.8px]">{value}</h3>
            <p className="mt-[7px] w-[180px] text-center text-[18px] leading-[27px] tracking-[0.39px]">{label}</p>
          </div>
        ))}
      </div>
      <div className="relative h-[650px] w-[1168px] overflow-hidden">
        <WorldMap />
        <Popup />
        <MapboxLogo />
        <div className="absolute bottom-0 right-0 flex h-[20px] w-[270px] items-center justify-between bg-white/50 px-[5px] font-['Liberation_Sans',Arial,sans-serif] text-[12px] text-black/75">
          <span className="whitespace-nowrap">© Mapbox © OpenStreetMap</span>
          <span className="whitespace-nowrap font-bold">Improve this map</span>
        </div>
      </div>
    </section>
  );
}

function Scrollbar() {
  return (
    <div className="flex w-[15px] shrink-0 flex-col items-center bg-[#f1f1f1]">
      <svg viewBox="0 0 15 15" className="h-[15px] w-[15px]" fill="#505050">
        <path d="M4 10h7L7.500 6z" />
      </svg>
      <div className="mt-[396px] h-[123px] w-[11px] bg-[#c1c1c1]" />
      <svg viewBox="0 0 15 15" className="mt-auto h-[15px] w-[15px]" fill="#505050">
        <path d="M4 5.500h7L7.500 9.500z" />
      </svg>
    </div>
  );
}

export default function App() {
  return (
    <div className="flex h-[1080px] w-[1920px] flex-col overflow-hidden bg-[#1e2028]">
      <DesktopBar />
      <TabStrip />
      <Toolbar />
      <div className="flex min-h-0 flex-1">
        <TrustedSection />
        <Scrollbar />
      </div>
    </div>
  );
}
